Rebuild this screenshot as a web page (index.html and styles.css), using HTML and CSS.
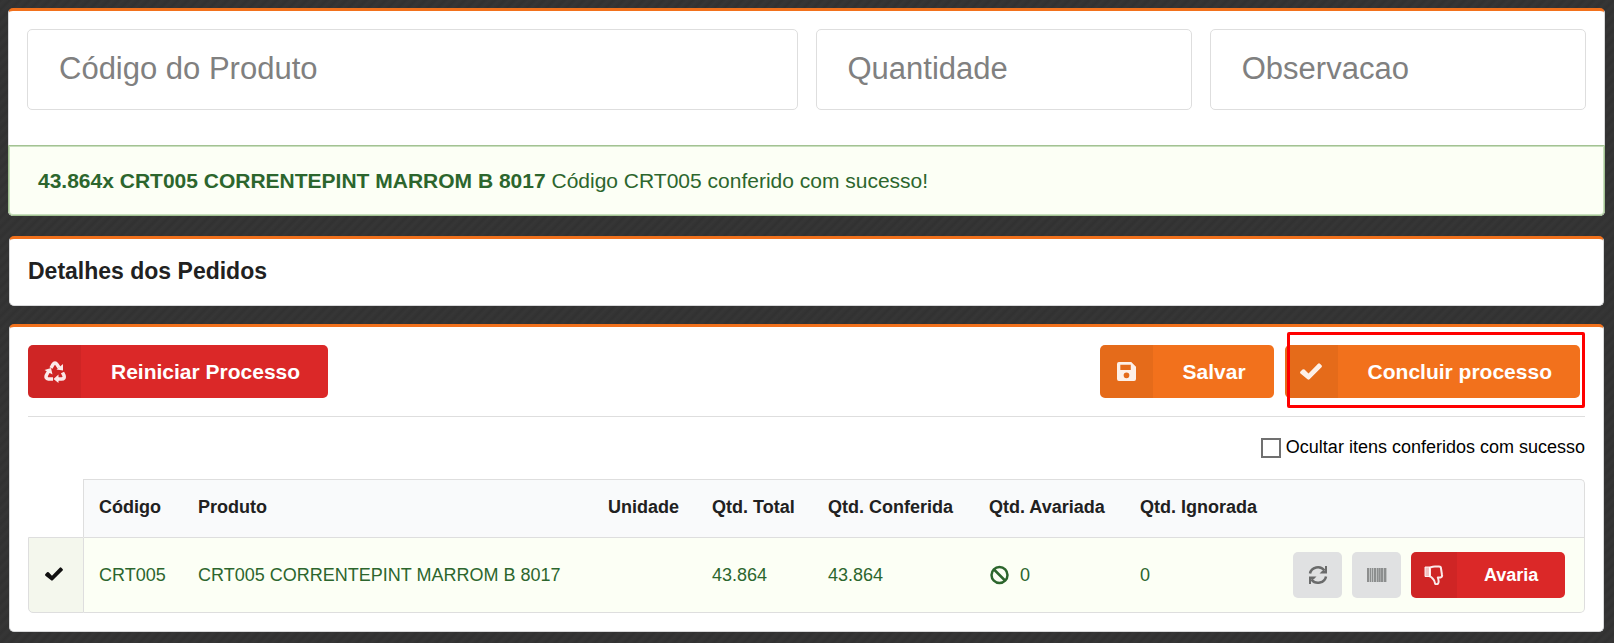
FILE: index.html
```
<!DOCTYPE html>
<html lang="pt-BR">
<head>
  <meta charset="UTF-8">
  <meta name="viewport" content="width=device-width, initial-scale=1.0">
  <title>Conferência de Pedidos</title>
  <link rel="stylesheet" href="styles.css">
</head>
<body>
  <form class="segment form_segment">
    <div class="fields">
      <input class="field_codigo" id="codigo" type="text" placeholder="Código do Produto" aria-label="Código do Produto">
      <input class="field_small" id="quantidade" type="text" placeholder="Quantidade" aria-label="Quantidade">
      <input class="field_small" id="observacao" type="text" placeholder="Observacao" aria-label="Observacao">
    </div>
    <div class="message">
      <b>43.864x CRT005 CORRENTEPINT MARROM B 8017</b> Código CRT005 conferido com sucesso!
    </div>
  </form>

  <div class="segment details">
    <h3>Detalhes dos Pedidos</h3>
  </div>

  <div class="segment process">
    <div class="actions">
      <button type="button" class="btn red">
        <span class="btn_icon">
          <svg width="22" height="22" viewBox="0 0 22 22" fill="none" stroke="currentColor" stroke-width="3.500">
            <path d="M7 7l2-3.500q2-3 4 0l2 3"/>
            <path d="M18.500 11.500l1.500 3q1 3.500-2.500 3.500H14"/>
            <path d="M9 18H4.500q-3.500-.5-2-4l2-3.500"/>
            <path d="M19 3v6.500l-6.500-1zM14.500 13.500V22L9.500 18zM.5 9L7 7l1.500 6.500z" fill="currentColor" stroke="none"/>
          </svg>
        </span>
        <span class="btn_text">Reiniciar Processo</span>
      </button>
      <div class="actions_right">
        <button type="button" class="btn orange">
          <span class="btn_icon">
            <svg width="19" height="19" viewBox="0 0 20 20" fill="currentColor" fill-rule="evenodd">
              <path d="M2 0h13l5 5v13q0 2-2 2H2q-2 0-2-2V2q0-2 2-2zM3.500 3v5.500h11V3zM10 11a3 3 0 1 0 0 6 3 3 0 0 0 0-6z"/>
            </svg>
          </span>
          <span class="btn_text">Salvar</span>
        </button>
        <div class="highlight">
          <button type="button" class="btn orange">
            <span class="btn_icon">
              <svg width="22" height="17" viewBox="0 0 22 17" fill="currentColor">
                <path d="M.5 8.500L2.500 6.500q1-.7 2 0L8.500 10.500 18 .8q1-.9 2 0l1.500 1.500q.9 1 0 2L9.500 16.200q-1 .9-2 0L.5 10.500q-.9-1 0-2z"/>
              </svg>
            </span>
            <span class="btn_text">Concluir processo</span>
          </button>
        </div>
      </div>
    </div>

    <div class="filter">
      <input type="checkbox" id="ocultar">
      <label for="ocultar">Ocultar itens conferidos com sucesso</label>
    </div>

    <table>
      <colgroup>
        <col class="c_check">
        <col class="c_codigo">
        <col>
        <col class="c_unidade">
        <col class="c_total">
        <col class="c_conferida">
        <col class="c_avariada">
        <col class="c_ignorada">
        <col class="c_botoes">
      </colgroup>
      <thead>
        <tr>
          <td class="empty"></td>
          <th>Código</th>
          <th>Produto</th>
          <th>Unidade</th>
          <th>Qtd. Total</th>
          <th>Qtd. Conferida</th>
          <th>Qtd. Avariada</th>
          <th>Qtd. Ignorada</th>
          <th></th>
        </tr>
      </thead>
      <tbody>
        <tr>
          <td class="check">
            <svg width="18" height="14" viewBox="0 0 22 17" fill="currentColor">
              <path d="M.5 8.500L2.500 6.500q1-.7 2 0L8.500 10.500 18 .8q1-.9 2 0l1.500 1.500q.9 1 0 2L9.500 16.200q-1 .9-2 0L.5 10.500q-.9-1 0-2z"/>
            </svg>
          </td>
          <td>CRT005</td>
          <td>CRT005 CORRENTEPINT MARROM B 8017</td>
          <td></td>
          <td>43.864</td>
          <td>43.864</td>
          <td>
            <div class="ban">
              <svg width="20" height="20" viewBox="0 0 20 20" fill="none" stroke="currentColor" stroke-width="2.500">
                <circle cx="10.500" cy="10" r="8"/>
                <path d="M5 4.500l11 11"/>
              </svg>
              0
            </div>
          </td>
          <td>0</td>
          <td>
            <div class="row_buttons">
              <button type="button" class="btn_gray" aria-label="Atualizar">
                <svg width="20" height="20" viewBox="0 0 20 20" fill="none" stroke="currentColor" stroke-width="2.500">
                  <path d="M2 8.500a8 7.500 0 0 1 14.500-3M18 11.500a8 7.500 0 0 1-14.500 3"/>
                  <path d="M19 1v7.500h-7.500l2.500-2.500 3-.5V1zM1 19v-7.500h7.500L6 14l-3 .5V19z" fill="currentColor" stroke="none"/>
                </svg>
              </button>
              <button type="button" class="btn_gray barcode" aria-label="Código de barras">
                <svg width="20" height="14" viewBox="0 0 20 14" fill="currentColor">
                  <path d="M0 0h2v14H0zM3 0h1v14H3zM5 0h1v14H5zM7 0h2v14H7zM10 0h1v14h-1zM11.500 0h2v14h-2zM14 0h2v14h-2zM17 0h2v14h-2z"/>
                  <path d="M2 0h18v14H2z" opacity=".4"/>
                </svg>
              </button>
              <button type="button" class="btn small red">
                <span class="btn_icon">
                  <svg width="20" height="20" viewBox="0 0 20 20" fill="none" stroke="currentColor" stroke-width="2" stroke-linejoin="round">
                    <path d="M6 11.500V2.500Q9 1.500 11 1.500h4q2 0 2 2l1 6.500q.5 1.500-1.200 2.500h-3q1.500 4 .3 6-1.500 1.500-3 .2-.3-3.200-2-4.700Q7 11.500 6 11.500z"/>
                    <path d="M1 2h4.500v9.500H1z" fill="currentColor" fill-opacity=".8" stroke-width="1"/>
                  </svg>
                </span>
                <span class="btn_text">Avaria</span>
              </button>
            </div>
          </td>
        </tr>
      </tbody>
    </table>
  </div>
</body>
</html>
```

FILE: styles.css
```
* {
  box-sizing: border-box;
}
body {
  margin: 0;
  padding: 8px 10px 12px 9px;
  font-family: "Liberation Sans", Arial, sans-serif;
  font-size: 18px;
  color: #212121;
  background: repeating-linear-gradient(135deg, #313131 0, #363636 3px, #343434 5px, #313131 7px);
}
.segment {
  background: #fff;
  border: 1px solid #d8d9da;
  border-top: 3px solid #f2711c;
  border-radius: 5px;
  margin-bottom: 18px;
}

/* form */
.form_segment {
  margin: 0 -1px 20px;
  border-bottom: 0;
}
.fields {
  display: grid;
  grid-template-columns: repeat(16, 1fr);
  gap: 18px;
  padding: 18px 18px 35px;
}
.fields input {
  min-width: 0;
  height: 81px;
  padding: 0 31px 2px;
  border: 1px solid #dedede;
  border-radius: 5px;
  font-family: inherit;
  font-size: 31px;
}
.fields input::placeholder {
  color: #808080;
}
.field_codigo {
  grid-column: span 8;
}
.field_small {
  grid-column: span 4;
}
.message {
  margin: 0 -1px;
  padding: 23px 29px 22px;
  border: 1px solid #a3c293;
  border-radius: 0 0 5px 5px;
  box-shadow: inset 0 0 0 1px #c8dfbd;
  background: #fcfff5;
  color: #2c662d;
  font-size: 21px;
  line-height: 24px;
}

.details {
  padding: 18px;
}
h3 {
  margin: 0;
  padding-bottom: 1px;
  font-size: 23px;
  line-height: 29px;
}

/* process */
.process {
  margin-bottom: 0;
  padding: 18px;
}
.actions {
  display: flex;
  justify-content: space-between;
  padding-bottom: 18px;
  border-bottom: 1px solid #dedede;
}
.actions_right {
  display: flex;
  gap: 11px;
  padding-right: 5px;
}
.btn {
  display: flex;
  align-items: stretch;
  height: 53px;
  padding: 0;
  border: 0;
  border-radius: 5px;
  overflow: hidden;
  color: #fff;
  font-family: inherit;
  font-size: 21px;
  font-weight: bold;
  cursor: pointer;
}
.btn_icon {
  display: flex;
  align-items: center;
  justify-content: center;
  width: 53px;
  background: rgba(0, 0, 0, 0.05);
  color: rgba(255, 255, 255, 0.9);
}
.btn_text {
  align-self: center;
  padding: 0 28px 0 30px;
}
.red {
  background: #db2828;
}
.orange {
  background: #f2711c;
}
.highlight {
  position: relative;
}
.highlight::after {
  content: "";
  position: absolute;
  top: -13px;
  right: -5px;
  bottom: -10px;
  left: 2px;
  border: 3px solid #ff0000;
  border-radius: 2px;
  pointer-events: none;
}
.filter {
  display: flex;
  align-items: center;
  justify-content: flex-end;
  gap: 5px;
  padding: 20px 0 21px;
  color: #000;
}
.filter input {
  appearance: none;
  width: 20px;
  height: 20px;
  margin: 0;
  border: 2px solid #707070;
  background: #fff;
}

/* table */
table {
  width: 100%;
  table-layout: fixed;
  border-collapse: separate;
  border-spacing: 0;
}
.c_check { width: 56px; }
.c_codigo { width: 99px; }
.c_unidade { width: 104px; }
.c_total { width: 116px; }
.c_conferida { width: 161px; }
.c_avariada { width: 151px; }
.c_ignorada { width: 153px; }
.c_botoes { width: 307px; }
th, td {
  padding: 0 0 0 15px;
  text-align: left;
  white-space: nowrap;
}
th {
  height: 58px;
  padding-bottom: 2px;
  border-top: 1px solid #dedede;
  background: #f9fafb;
}
th:last-child {
  border-right: 1px solid #dedede;
  border-radius: 0 5px 0 0;
}
thead .empty {
  padding: 0;
  border-right: 1px solid #dedede;
}
tbody td {
  height: 76px;
  border-top: 1px solid #dedede;
  border-bottom: 1px solid #dedede;
  background: #fcfff5;
  color: #2c662d;
}
tbody td:last-child {
  border-right: 1px solid #dedede;
  border-radius: 0 0 5px 0;
}
tbody .check {
  padding: 0 4px 0 0;
  border-left: 1px solid #dedede;
  border-right: 1px solid #dedede;
  border-radius: 0 0 0 5px;
  background: #f4f7ed;
  color: #111;
  text-align: center;
}
.ban {
  display: flex;
  align-items: center;
  gap: 11px;
}
.row_buttons {
  display: flex;
  gap: 10px;
}
.btn_gray {
  display: flex;
  align-items: center;
  justify-content: center;
  width: 49px;
  height: 46px;
  padding: 0;
  border: 0;
  border-radius: 5px;
  background: #e0e1e2;
  color: #6a6b6b;
  cursor: pointer;
}
.barcode {
  color: #8d8e8e;
}
.small {
  height: 46px;
  font-size: 18px;
}
.small .btn_icon {
  width: 46px;
}
.small .btn_text {
  padding: 0 27px;
}
```
